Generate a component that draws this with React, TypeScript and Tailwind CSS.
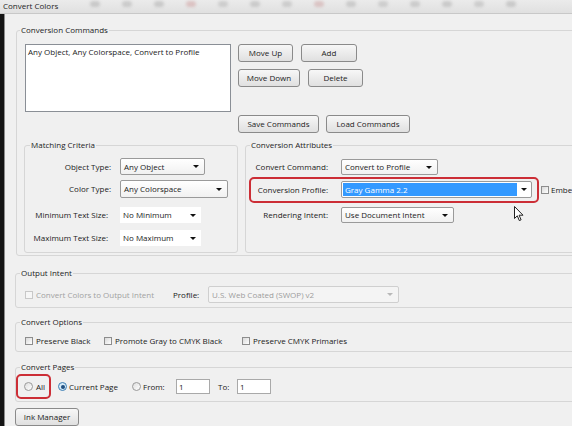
import React from 'react';

const font = { fontFamily: '"Open Sans", "Noto Sans", sans-serif' };

const Btn = ({ w, children }: { w: string; children: React.ReactNode }) => (
    <div className={`${w} h-[18px] shrink-0 flex items-center justify-center rounded-[3px] border border-[#8a8a8a] bg-linear-to-b from-[#f7f7f7] to-[#e0e0e0] text-[#1c1c1c]`}>
        {children}
    </div>
);

const Arrow = ({ light }: { light?: boolean }) => (
    <span className={`w-0 h-0 border-x-[3px] border-x-transparent border-t-[3px] ${light ? 'border-t-[#b8b8b8]' : 'border-t-[#111]'}`} />
);

interface SelectProps {
    w: string;
    h?: string;
    value: string;
    flat?: boolean;
    disabled?: boolean;
}

const Select = ({ w, h = 'h-[17px]', value, flat, disabled }: SelectProps) => (
    <div
        className={`${w} ${h} shrink-0 flex items-center justify-between pl-[3px] pr-[5px] ${
            flat
                ? 'bg-white'
                : disabled
                ? 'rounded-[2px] border border-[#cfcfcf] bg-[#f4f4f4] text-[#9c9c9c]'
                : 'rounded-[2px] border border-[#9a9a9a] bg-linear-to-b from-[#ffffff] to-[#f1f1f1]'
        }`}
    >
        <span className="whitespace-nowrap">{value}</span>
        <Arrow light={disabled} />
    </div>
);

const Check = ({ disabled }: { disabled?: boolean }) => (
    <span
        className={`block w-[8px] h-[8px] shrink-0 border ${
            disabled ? 'border-[#c8c8c8] bg-[#f6f6f6]' : 'border-[#8d8d8d] bg-linear-to-br from-[#d9d9d9] to-[#ffffff]'
        }`}
    />
);

const Radio = ({ on }: { on?: boolean }) => (
    <span
        className={`w-[9px] h-[9px] shrink-0 rounded-full border flex items-center justify-center ${
            on ? 'border-[#3d7fb3] bg-[#d6ebf8]' : 'border-[#9a9a9a] bg-linear-to-br from-[#dedede] to-[#ffffff]'
        }`}
    >
        {on && <span className="w-[4px] h-[4px] rounded-full bg-[#1f4f80]" />}
    </span>
);

const Legend = ({ ml, children }: { ml: string; children: React.ReactNode }) => (
    <legend className={`${ml} px-[1px] leading-[12px] text-[#1c1c1c]`}>{children}</legend>
);

export default function App() {
    return (
        <div
            className="relative w-[572px] h-[426px] overflow-hidden bg-[#f0f0f0] text-[8px] leading-[12px] text-[#1a1a1a] flex flex-col"
            style={font}
        >
            {/* Title bar */}
            <div className="h-[14px] shrink-0 flex items-start bg-linear-to-b from-[#ebebeb] to-[#e0e0e0] border-b border-[#c8c8c8]">
                <span className="pl-[3px] text-[8px] leading-[11px] text-[#1e1e1e] w-[90px] shrink-0">Convert Colors</span>
                <div className="flex gap-[22px] pt-[1px] blur-[1.5px] opacity-40">
                    {['#9a9a9a', '#a0a0a0', '#9c9c9c', '#c98a8a', '#a5a5a5', '#9e9e9e', '#a3a3a3', '#c78e8e', '#9f9f9f', '#a6a6a6', '#a0a0a0', '#9d9d9d', '#a4a4a4', '#9b9b9b'].map((c, i) => (
                        <span key={i} className="w-[10px] h-[6px] rounded-full" style={{ backgroundColor: c }} />
                    ))}
                </div>
            </div>

            <div className="flex flex-1 min-h-0">
                {/* dark screen edge */}
                <div className="w-[4px] shrink-0 bg-[#141414]" />

                {/* Dialog panel */}
                <div className="flex-1 min-w-0 flex flex-col border-l border-[#8c8c8c] overflow-hidden">
                    {/* Conversion Commands */}
                    <fieldset className="ml-[11px] mt-[10px] w-[570px] shrink-0 rounded-[3px] border border-[#d6d6d6] pb-[2px]">
                        <Legend ml="ml-[3px]">Conversion Commands</Legend>
                        <div className="mt-[8px] pl-[8px] flex">
                            <div className="w-[206px] h-[68px] shrink-0 border border-[#8a8f96] bg-white pl-[2px] pt-[1px] whitespace-nowrap">
                                Any Object, Any Colorspace, Convert to Profile
                            </div>
                            <div className="ml-[7px] flex flex-col">
                                <div className="flex gap-[8px]">
                                    <Btn w="w-[55px]">Move Up</Btn>
                                    <Btn w="w-[56px]">Add</Btn>
                                </div>
                                <div className="mt-[7px] flex gap-[8px]">
                                    <Btn w="w-[62px]">Move Down</Btn>
                                    <Btn w="w-[55px]">Delete</Btn>
                                </div>
                                <div className="mt-[28px] flex gap-[7px]">
                                    <Btn w="w-[81px]">Save Commands</Btn>
                                    <Btn w="w-[84px]">Load Commands</Btn>
                                </div>
                            </div>
                        </div>

                        <div className="mt-[6px] pl-[7px] flex">
                            {/* Matching Criteria */}
                            <fieldset className="w-[214px] h-[114px] shrink-0 rounded-[3px] border border-[#d6d6d6]">
                                <Legend ml="ml-[5px]">Matching Criteria</Legend>
                                <div className="mt-[7px] flex items-center">
                                    <span className="w-[86px] text-right">Object Type:</span>
                                    <div className="ml-[9px]"><Select w="w-[85px]" value="Any Object" /></div>
                                </div>
                                <div className="mt-[5px] flex items-center">
                                    <span className="w-[86px] text-right">Color Type:</span>
                                    <div className="ml-[9px]"><Select w="w-[108px]" h="h-[18px]" value="Any Colorspace" /></div>
                                </div>
                                <div className="mt-[9px] flex items-center">
                                    <span className="w-[86px] pr-[3px] text-right whitespace-nowrap">Minimum Text Size:</span>
                                    <div className="ml-[9px]"><Select w="w-[81px]" h="h-[16px]" value="No Minimum" flat /></div>
                                </div>
                                <div className="mt-[7px] flex items-center">
                                    <span className="w-[86px] pr-[3px] text-right whitespace-nowrap">Maximum Text Size:</span>
                                    <div className="ml-[9px]"><Select w="w-[81px]" h="h-[16px]" value="No Maximum" flat /></div>
                                </div>
                            </fieldset>

                            {/* Conversion Attributes */}
                            <fieldset className="ml-[7px] flex-1 h-[114px] rounded-[3px] border border-[#d6d6d6]">
                                <Legend ml="ml-[4px]">Conversion Attributes</Legend>
                                <div className="mt-[8px] ml-[3px] flex items-center border-x-2 border-transparent">
                                    <span className="w-[77px] text-right">Convert Command:</span>
                                    <div className="ml-[13px]"><Select w="w-[97px]" h="h-[16px]" value="Convert to Profile" /></div>
                                </div>
                                <div className="mt-[2px] flex items-center">
                                    <div className="ml-[3px] w-[290px] h-[26px] shrink-0 flex items-center rounded-[5px] border-2 border-[#cc2e36] pb-[1px]">
                                        <span className="w-[77px] text-right">Conversion Profile:</span>
                                        <div className="ml-[13px] w-[191px] h-[17px] flex items-stretch rounded-[2px] border border-[#9a9a9a] bg-white p-[1px]">
                                            <span className="flex-1 bg-[#3399ff] text-white pl-[2px] leading-[13px]">Gray Gamma 2.2</span>
                                            <span className="w-[13px] flex items-center justify-center"><Arrow /></span>
                                        </div>
                                    </div>
                                    <div className="ml-[2px] flex items-center">
                                        <Check />
                                        <span className="ml-[2px] whitespace-nowrap">Embed</span>
                                    </div>
                                </div>
                                <div className="mt-[4px] ml-[3px] flex items-center border-x-2 border-transparent">
                                    <span className="w-[77px] text-right">Rendering Intent:</span>
                                    <div className="ml-[13px]"><Select w="w-[113px]" h="h-[16px]" value="Use Document Intent" /></div>
                                </div>
                            </fieldset>
                        </div>
                    </fieldset>

                    {/* Output Intent */}
                    <fieldset className="ml-[10px] mt-[11px] w-[570px] shrink-0 rounded-[3px] border border-[#d6d6d6] pb-[4px]">
                        <Legend ml="ml-[4px]">Output Intent</Legend>
                        <div className="mt-[7px] flex items-center">
                            <div className="w-[157px] shrink-0 flex items-center pl-[9px]">
                                <Check disabled />
                                <span className="ml-[3px] text-[#a2a2a2] whitespace-nowrap">Convert Colors to Output Intent</span>
                            </div>
                            <span className="w-[35px] shrink-0">Profile:</span>
                            <Select w="w-[191px]" value="U.S. Web Coated (SWOP) v2" disabled />
                        </div>
                    </fieldset>

                    {/* Convert Options */}
                    <fieldset className="ml-[10px] mt-[8px] w-[570px] shrink-0 rounded-[3px] border border-[#d6d6d6] pb-[4px]">
                        <Legend ml="ml-[4px]">Convert Options</Legend>
                        <div className="mt-[7px] flex items-center pl-[9px]">
                            <div className="w-[79px] shrink-0 flex items-center">
                                <Check />
                                <span className="ml-[3px] whitespace-nowrap">Preserve Black</span>
                            </div>
                            <div className="w-[138px] shrink-0 flex items-center">
                                <Check />
                                <span className="ml-[3px] whitespace-nowrap">Promote Gray to CMYK Black</span>
                            </div>
                            <div className="flex items-center">
                                <Check />
                                <span className="ml-[3px] whitespace-nowrap">Preserve CMYK Primaries</span>
                            </div>
                        </div>
                    </fieldset>

                    {/* Convert Pages */}
                    <fieldset className="ml-[10px] mt-[9px] w-[570px] shrink-0 rounded-[3px] border border-[#d6d6d6] pb-[2px]">
                        <Legend ml="ml-[4px]">Convert Pages</Legend>
                        <div className="mt-[1px] flex items-center">
                            <div className="w-[35px] h-[25px] shrink-0 flex items-center rounded-[5px] border-2 border-[#cc2e36] pl-[6px]">
                                <Radio />
                                <span className="ml-[3px]">All</span>
                            </div>
                            <div className="ml-[7px] w-[74px] shrink-0 flex items-center">
                                <Radio on />
                                <span className="ml-[2px] whitespace-nowrap">Current Page</span>
                            </div>
                            <div className="w-[44px] shrink-0 flex items-center">
                                <Radio />
                                <span className="ml-[2px]">From:</span>
                            </div>
                            <div className="w-[34px] h-[15px] shrink-0 border border-[#a9a9a9] bg-white pl-[2px] leading-[13px]">1</div>
                            <span className="ml-[8px] w-[19px] shrink-0">To:</span>
                            <div className="w-[34px] h-[15px] shrink-0 border border-[#a9a9a9] bg-white pl-[2px] leading-[13px]">1</div>
                        </div>
                    </fieldset>

                    <div className="ml-[10px] mt-[6px]">
                        <Btn w="w-[64px]">Ink Manager</Btn>
                    </div>
                </div>
            </div>

            {/* mouse pointer over the dialog */}
            <svg className="absolute left-[514px] top-[206px]" width="10" height="16" viewBox="0 0 10 16">
                <path d="M0.5 0.5 L0.5 12.5 L3.3 9.8 L5.3 14.6 L7.1 13.8 L5.1 9.2 L9 9.2 Z" fill="#ffffff" stroke="#222" strokeWidth="1" strokeLinejoin="round" />
            </svg>
        </div>
    );
}
